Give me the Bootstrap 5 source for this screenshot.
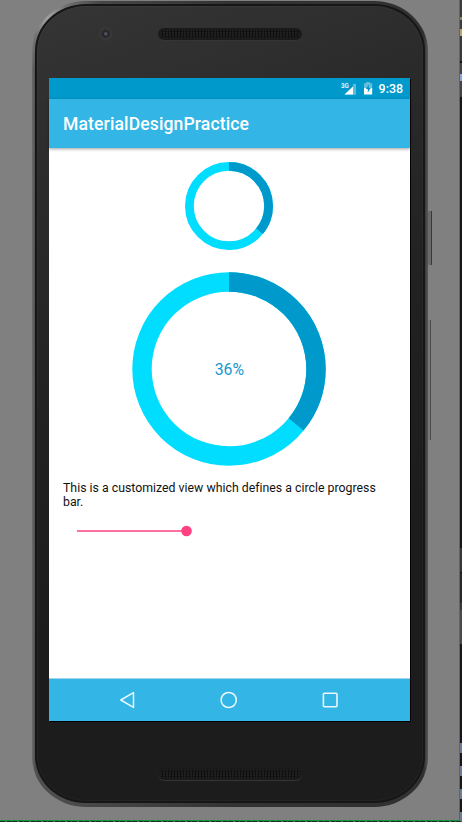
<!DOCTYPE html>
<html lang="en">
<head>
<meta charset="utf-8">
<meta name="viewport" content="width=device-width, initial-scale=1">
<title>MaterialDesignPractice</title>
<link href="https://cdn.jsdelivr.net/npm/bootstrap@5.3.0/dist/css/bootstrap.min.css" rel="stylesheet">
<style>
  body { width: 462px; height: 822px; background: #1e1e1e; font-family: Roboto, sans-serif; }
  .desk { width: 459px; height: 820px; background: #808080; padding: 1px 0 0 32px; }
  .window-frame { width: 460px; height: 821px; border-right: 1px solid #1c8a48; border-bottom: 1px solid #14943f; }
  .window-row { width: 462px; height: 821px; }
  .edge { width: 2px; height: 821px; background: #1b1b1d; }
  .edge span { display: block; width: 2px; }
  .floor { height: 1px; background: repeating-linear-gradient(90deg, #17301f 0 5px, #57705e 5px 7px, #1b2a20 7px 11px, #3f5a48 11px 12px); }

  .phone { width: 396px; height: 806px; border-radius: 54px / 50px; padding: 3px 3px 4px 3px;
    background: radial-gradient(circle at 14px 14px, #a5a5a5 0, rgba(150,150,150,.5) 22px, transparent 55px),
      linear-gradient(90deg, #6c6c6c 0, #505050 3px, #333 50%, #303030 392px, #585858 396px); }
  .phone-rim { height: 799px; border-radius: 51px / 47px; background: #161616; padding: 2px; }
  .phone-face { height: 795px; border-radius: 49px / 45px; padding: 22px 12px 0; box-shadow: inset 0 0 0 1px rgba(255,255,255,.03);
    background: linear-gradient(160deg, #353536 0, #2b2b2c 20%, #212121 45%, #1c1c1c 70%); }
  .phone-side { position: absolute; }
  .side-power { left: 396px; top: 210px; width: 4px; height: 54px; background: #6b6868; border-right: 1px solid #3c3636; }
  .side-volume { left: 396px; top: 319px; width: 3px; height: 120px; background: #777; border-right: 1px solid #514c4c; }

  .lens { width: 15px; height: 15px; border-radius: 50%; margin: -2px 0 0 49px;
    background: radial-gradient(circle at 52% 52%, #5b5260 0 .8px, #26242c 2.5px, #29282c 3.6px, #39393a 5px, #343435 7px); }
  .grille { width: 144px; height: 12px; border-radius: 6px; background: #1a1a1a; box-shadow: 0 1px 0 #353535; padding: 2px 3px; }
  .grille i { display: block; height: 8px; border-radius: 4px; background: radial-gradient(circle, #070707 0 .6px, #202020 1.3px) 0 0 / 3px 2.7px; }
  .top-parts { height: 50px; }
  .screen { width: 361px; height: 643px; background: #fff; box-shadow: 1px 1px 0 #000; }

  .status { height: 21px; background: #0099cc; padding-right: 7px; color: #fff; font-size: 12.4px; font-weight: 500; }
  .status span { line-height: 21px; }
  .app-bar { height: 49px; min-height: 0; background: #33b5e5; padding: 0 14px; box-shadow: 0 1px 3px rgba(0,0,0,.38); }
  .app-bar .navbar-brand { font-size: 17.57px; letter-spacing: .12px; font-weight: 500; line-height: 24px; color: #fff; padding: 1px 0 0; }
  .page-body { height: 530px; padding: 14px 14px 0; }
  .rings { width: 332px; }
  .ring-lg { margin-top: 22px; }
  .note { margin-top: 15px; font-size: 12.3px; letter-spacing: .01px; line-height: 14.4px; color: #111; }
  .slider { margin: 14px 0 0 14px; }
  .soft-keys { height: 43px; background: #33b5e5; border-top: 1px solid #a2d3ea; padding: 0 1px 1px 0; }
  .soft-keys svg { margin: 0 41.5px; }
  svg { display: block; }
</style>
<script src="https://cdn.jsdelivr.net/npm/bootstrap@5.3.0/dist/js/bootstrap.bundle.min.js"></script>
</head>
<body class="m-0 overflow-hidden">
<div class="window-row d-flex">
  <div class="window-frame flex-shrink-0">
    <div class="desk">
      <div class="phone position-relative">
        <div class="phone-side side-power"></div>
        <div class="phone-side side-volume"></div>
        <div class="phone-rim">
          <div class="phone-face">
            <div class="top-parts d-flex align-items-start">
              <div class="lens"></div>
              <div class="grille" style="margin-left:45px"><i></i></div>
            </div>
            <main class="screen d-flex flex-column">
              <div class="status d-flex justify-content-end align-items-center">
                <svg width="17" height="14" viewBox="0 0 17 14">
                  <path d="M15 1.5v11H3.5z" fill="#5cbddd"/>
                  <path d="M12 4.5v8H3.5z" fill="#fff"/>
                  <path d="M12 2h3v10.500h-3z" fill="#5cbddd"/>
                  <text x="0" y="6" font-size="6.6" font-weight="500" fill="#fff" font-family="Roboto, sans-serif" textLength="7.8" lengthAdjust="spacingAndGlyphs">3G</text>
                </svg>
                <svg width="11" height="13" viewBox="0 0 11 13" style="margin:0 1px 0 5px">
                  <path d="M3.2 0h3.600v1.200h2.400V6H1V1.200h2.200z" fill="#66bfdf"/>
                  <path d="M1 6h8.200v6.500H1z" fill="#fff"/>
                  <path d="M5.900 2.600 2.800 7h2v3.500l3-4.600H5.900z" fill="#0099cc"/>
                </svg>
                <span class="ms-1">9:38</span>
              </div>
              <nav class="navbar app-bar position-relative">
                <span class="navbar-brand m-0">MaterialDesignPractice</span>
              </nav>
              <section class="page-body">
                <div class="rings">
                  <svg class="mx-auto" width="88" height="88" viewBox="-44 -44 88 88">
                    <circle r="39.6" fill="none" stroke="#00ddff" stroke-width="8.8"/>
                    <circle r="39.6" fill="none" stroke="#0099cc" stroke-width="8.8" pathLength="100" stroke-dasharray="36 64" transform="rotate(-90)"/>
                  </svg>
                  <svg class="ring-lg mx-auto" width="194" height="194" viewBox="-97 -97 194 194">
                    <circle r="87" fill="none" stroke="#00ddff" stroke-width="19.4"/>
                    <circle r="87" fill="none" stroke="#0099cc" stroke-width="19.4" pathLength="100" stroke-dasharray="36 64" transform="rotate(-90)"/>
                    <text x="0.3" y="6.2" text-anchor="middle" font-size="15.8" fill="#1698ce" font-family="Roboto, sans-serif">36%</text>
                  </svg>
                </div>
                <p class="note mb-0">This is a customized view which defines a circle progress bar.</p>
                <svg class="slider" width="318" height="14" viewBox="0 0 318 14">
                  <path d="M0 7h109" stroke="#ff4081" stroke-width="1.7"/>
                  <circle cx="109.5" cy="7" r="5.3" fill="#ff4081"/>
                </svg>
              </section>
              <footer class="soft-keys d-flex justify-content-center align-items-center">
                <svg width="18" height="18" viewBox="0 0 18 18"><path d="M14.500 1.600v14.800L1.800 9z" fill="none" stroke="#eaf7fc" stroke-width="1.5" stroke-linejoin="round"/></svg>
                <svg width="18" height="18" viewBox="0 0 18 18"><circle cx="8.7" cy="9" r="7.6" fill="none" stroke="#eaf7fc" stroke-width="1.5"/></svg>
                <svg width="18" height="18" viewBox="0 0 18 18"><rect x="2.4" y="2.2" width="13.6" height="13.6" rx="1" fill="none" stroke="#eaf7fc" stroke-width="1.6"/></svg>
              </footer>
            </main>
            <div class="grille mx-auto" style="margin-top:47px"><i></i></div>
          </div>
        </div>
      </div>
    </div>
  </div>
  <div class="edge">
    <span style="height:17px;background:#3c3c3c"></span>
    <span style="height:3px;background:#8c8758"></span>
    <span style="height:9px;background:#3c3c3c"></span>
    <span style="height:7px;background:#b7a46f"></span>
    <span style="height:25px;background:#3a3a3a"></span>
    <span style="height:2px;background:#111"></span>
    <span style="height:11px;background:#424445"></span>
    <span style="height:7px;background:#8fa5cc"></span>
    <span style="height:16px;background:#424445"></span>
    <span style="height:451px;background:#161619"></span>
    <span style="height:24px;background:#36383a"></span>
    <span style="height:1px;background:#151515"></span>
    <span style="height:30px;background:#28282b"></span>
    <span style="height:7px;background:#36383a"></span>
    <span style="height:29px;background:#4a4a4a"></span>
    <span style="height:5px;background:#4a4b4c"></span>
    <span style="height:99px;background:#17171b"></span>
    <span style="height:10px;background:#6c7c96"></span>
    <span style="height:13px;background:#17171b"></span>
    <span style="height:10px;background:#6c7c96"></span>
    <span style="height:13px;background:#17171b"></span>
    <span style="height:10px;background:#6c7c96"></span>
    <span style="height:13px;background:#17171b"></span>
    <span style="height:9px;background:#6c7c96"></span>
  </div>
</div>
<div class="floor"></div>
</body>
</html>
